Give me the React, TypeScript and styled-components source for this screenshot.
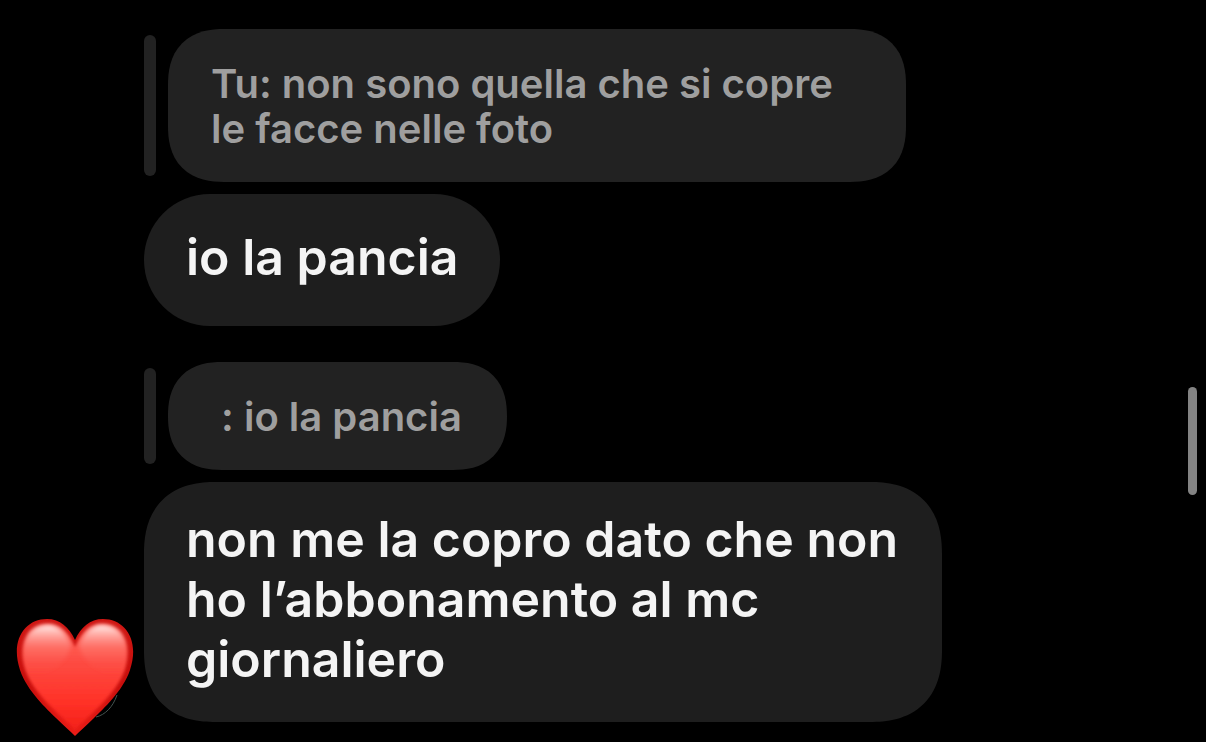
import React from "react";
import styled, { createGlobalStyle } from "styled-components";

const GlobalStyle = createGlobalStyle`
  body {
    margin: 0;
    background: #000;
    font-family: Inter, "Liberation Sans", sans-serif;
    font-weight: 600;
  }
`;

const Thread = styled.main`
  box-sizing: border-box;
  position: relative;
  min-height: 100vh;
  padding: 29px 40px 4px 16px;
  overflow: hidden;
`;

const Group = styled.article`
  display: flex;
  align-items: flex-end;
  gap: 10px;
`;

const Side = styled.div`
  flex: none;
  width: 118px;
  height: 120px;
`;

const Messages = styled.div<{ $space: number }>`
  display: flex;
  flex: 1;
  flex-direction: column;
  align-items: flex-start;
  gap: 12px;
  min-width: 0;
  padding-bottom: ${(p) => p.$space}px;
`;

const Reply = styled.div`
  display: flex;
  gap: 12px;
`;

const ReplyBar = styled.span`
  flex: none;
  width: 12px;
  margin: 6px 0;
  border-radius: 6px;
  background: #222;
`;

const Quote = styled.blockquote`
  box-sizing: border-box;
  max-width: 738px;
  margin: 0;
  padding: 32px 45px 31px 43px;
  border-radius: 56px;
  corner-shape: superellipse(1.25);
  background: #222;
  color: #9f9f9f;
  font-size: 40px;
  line-height: 45px;
`;

const Bubble = styled.p<{ $pill?: boolean }>`
  display: flex;
  align-items: center;
  box-sizing: border-box;
  min-height: 132px;
  max-width: 798px;
  margin: 0;
  padding: 27px 42px 33px;
  border-radius: ${(p) => (p.$pill ? 66 : 72)}px;
  corner-shape: ${(p) => (p.$pill ? "round" : "superellipse(1.25)")};
  background: #1e1e1e;
  color: #f4f4f4;
  font-size: 50px;
  line-height: 60px;
`;

const ScrollThumb = styled.span`
  position: absolute;
  top: 387px;
  right: 9px;
  width: 9px;
  height: 108px;
  border-radius: 5px;
  background: #838383;
`;

const HEART =
  "M59 118 C54 113 47 107 40 100 C31 91 11 73 4 52 C-6 22 9 1 31 1 C44 1 53 9 59 22 C65 9 74 1 87 1 C109 1 124 22 114 52 C107 73 87 91 78 100 C71 107 64 113 59 118 Z";

const INNER =
  "M59 112 C48 100 17 77 9 51 C1 24 14 6 32 6 C44 6 53 15 59 29 C65 15 74 6 86 6 C104 6 117 24 109 51 C101 77 70 100 59 112 Z";

function Heart() {
  return (
    <svg width="118" height="120" viewBox="0 0 118 120" role="img" aria-label="❤️">
      <defs>
        <linearGradient id="rim" x1="0" y1="0" x2="0" y2="1">
          <stop offset="0" stopColor="#d01713" />
          <stop offset="0.55" stopColor="#c70e0c" />
          <stop offset="1" stopColor="#ec1d17" />
        </linearGradient>
        <linearGradient id="body" x1="0" y1="0" x2="0" y2="1">
          <stop offset="0" stopColor="#ff6a61" />
          <stop offset="0.35" stopColor="#fd4c43" />
          <stop offset="0.75" stopColor="#ff3026" />
          <stop offset="1" stopColor="#f3211a" />
        </linearGradient>
        <linearGradient id="gloss" x1="0" y1="0" x2="0" y2="1">
          <stop offset="0" stopColor="#fff0ee" />
          <stop offset="0.16" stopColor="#ffc9c3" stopOpacity="0.8" />
          <stop offset="0.45" stopColor="#ff8e86" stopOpacity="0.4" />
          <stop offset="1" stopColor="#ff5046" stopOpacity="0" />
        </linearGradient>
        <filter id="soft" x="-20%" y="-20%" width="140%" height="140%">
          <feGaussianBlur stdDeviation="1.4" />
        </filter>
        <filter id="softer" x="-20%" y="-20%" width="140%" height="140%">
          <feGaussianBlur stdDeviation="2" />
        </filter>
      </defs>
      <path d="M80 99 C89 97 97 89 101 77" fill="none" stroke="#46524f" strokeWidth="1" />
      <path d={HEART} fill="url(#rim)" />
      <path d={INNER} fill="url(#body)" filter="url(#soft)" />
      <g filter="url(#softer)">
        <path d="M8 40 C5 18 17 7 32 7 C43 7 50 15 55 27 C52 46 26 62 11 56 Z" fill="url(#gloss)" />
        <path d="M110 40 C113 18 101 7 86 7 C75 7 68 15 63 27 C66 46 92 62 107 56 Z" fill="url(#gloss)" />
      </g>
    </svg>
  );
}

export default function App() {
  return (
    <>
      <GlobalStyle />
      <Thread>
        <Group>
          <Side />
          <Messages $space={36}>
            <Reply>
              <ReplyBar />
              <Quote>Tu: non sono quella che si copre le facce nelle foto</Quote>
            </Reply>
            <Bubble $pill>io la pancia</Bubble>
          </Messages>
        </Group>
        <Group>
          <Side>
            <Heart />
          </Side>
          <Messages $space={16}>
            <Reply>
              <ReplyBar />
              <Quote>{"\u00a0: io la pancia"}</Quote>
            </Reply>
            <Bubble>non me la copro dato che non ho l’abbonamento al mc giornaliero</Bubble>
          </Messages>
        </Group>
        <ScrollThumb />
      </Thread>
    </>
  );
}
